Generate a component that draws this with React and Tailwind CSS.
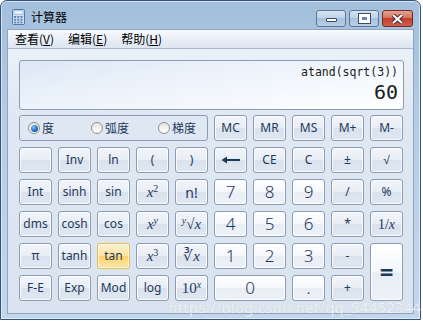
import React from "react";

const ui = { fontFamily: '"Noto Sans", "Noto Sans CJK SC", sans-serif' };
const cjk = { fontFamily: '"Noto Sans CJK SC", "Noto Sans", sans-serif' };
const serif = { fontFamily: '"Liberation Serif", serif' };

const fnBtn =
  "border border-[#8d9cb2] rounded-[3px] bg-[linear-gradient(180deg,#f2f5fa_0%,#e8eef6_48%,#d9e2ee_52%,#e0e7f1_100%)] shadow-[inset_0_0_0_1px_rgba(255,255,255,0.75)] text-[#1e395b] flex items-center justify-center";
const numBtn =
  "border border-[#8d9cb2] rounded-[3px] bg-[linear-gradient(180deg,#ffffff_0%,#f4f7fb_48%,#e8eef5_52%,#eef2f8_100%)] shadow-[inset_0_0_0_1px_rgba(255,255,255,0.9)] text-[#1e395b] flex items-center justify-center";
const hotBtn =
  "border border-[#e3bf5a] rounded-[3px] bg-[linear-gradient(180deg,#fdf1d2_0%,#fde3a0_48%,#fcd36e_52%,#fde6a8_100%)] shadow-[inset_0_0_0_1px_rgba(255,255,255,0.6)] text-[#1e395b] flex items-center justify-center";

const X = () => <i style={serif}>x</i>;

const Back = () => (
  <svg width="20" height="8" viewBox="0 0 20 8">
    <path d="M19 4H4" stroke="#1e395b" strokeWidth="2" />
    <path d="M0.5 4L6 0.5V7.5Z" fill="#1e395b" />
  </svg>
);

const Radio = ({ on }) => (
  <span className="w-[12px] h-[12px] shrink-0 rounded-full border border-[#8f8f8f] bg-[linear-gradient(180deg,#e6e6e6,#ffffff)] flex items-center justify-center">
    {on && (
      <span className="w-[7px] h-[7px] rounded-full bg-[radial-gradient(circle_at_35%_30%,#7fc3ff,#0b5eb8_70%)]" />
    )}
  </span>
);

const CalcIcon = () => (
  <svg width="13" height="16" viewBox="0 0 13 16">
    <rect x="0.5" y="0.5" width="12" height="15" rx="1" fill="#cfe0f3" stroke="#4f79aa" />
    <rect x="2" y="2" width="9" height="3" fill="#ffffff" stroke="#7d9cc2" strokeWidth="0.6" />
    {[0, 1, 2].map((r) =>
      [0, 1, 2].map((c) => (
        <rect key={r + "-" + c} x={2 + c * 3.2} y={7 + r * 2.8} width="2.2" height="1.8" fill="#5f86b8" />
      ))
    )}
  </svg>
);

const rows = [
  [
    { t: "", k: "fn" }, { t: "Inv", k: "fn" }, { t: "ln", k: "fn" }, { t: "(", k: "fn" }, { t: ")", k: "fn" },
    { t: <Back />, k: "fn" }, { t: "CE", k: "fn" }, { t: "C", k: "fn" }, { t: "±", k: "fn" },
    { t: <span style={{ fontFamily: '"Liberation Sans", sans-serif' }}>√</span>, k: "fn" },
  ],
  [
    { t: "Int", k: "fn" }, { t: "sinh", k: "fn" }, { t: "sin", k: "fn" },
    { t: <span className="text-[15px]"><X /><sup className="text-[10px]" style={serif}>2</sup></span>, k: "fn" },
    { t: <span className="text-[14px]">n!</span>, k: "fn" },
    { t: "7", k: "num" }, { t: "8", k: "num" }, { t: "9", k: "num" }, { t: "/", k: "fn" }, { t: "%", k: "fn" },
  ],
  [
    { t: "dms", k: "fn" }, { t: "cosh", k: "fn" }, { t: "cos", k: "fn" },
    { t: <span className="text-[15px]"><X /><sup className="text-[10px]" style={serif}><i>y</i></sup></span>, k: "fn" },
    { t: <span className="text-[15px]" style={serif}><sup className="text-[10px]"><i>y</i></sup>√<X /></span>, k: "fn" },
    { t: "4", k: "num" }, { t: "5", k: "num" }, { t: "6", k: "num" }, { t: "*", k: "fn" },
    { t: <span className="text-[14px]" style={serif}>1/<i>x</i></span>, k: "fn" },
  ],
  [
    { t: "π", k: "fn" }, { t: "tanh", k: "fn" }, { t: "tan", k: "hot" },
    { t: <span className="text-[15px]"><X /><sup className="text-[10px]" style={serif}>3</sup></span>, k: "fn" },
    { t: <span className="text-[15px]" style={serif}>∛<X /></span>, k: "fn" },
    { t: "1", k: "num" }, { t: "2", k: "num" }, { t: "3", k: "num" }, { t: "-", k: "fn" },
    { t: <span className="text-[24px] font-bold leading-none">=</span>, k: "num", cls: "row-span-2" },
  ],
  [
    { t: "F-E", k: "fn" }, { t: "Exp", k: "fn" }, { t: "Mod", k: "fn" }, { t: "log", k: "fn" },
    { t: <span className="text-[15px]" style={serif}>10<sup className="text-[10px]"><i>x</i></sup></span>, k: "fn" },
    { t: "0", k: "num", cls: "col-span-2" }, { t: ".", k: "num" }, { t: "+", k: "fn" },
  ],
];

const kindCls = { fn: fnBtn, num: numBtn, hot: hotBtn };

export default function App() {
  return (
    <div className="w-[423px] h-[322px] bg-white relative overflow-hidden" style={ui}>
      <div className="w-[421px] h-[320px] rounded-t-[7px] border border-[#3c5274] bg-[linear-gradient(180deg,#a3bfdc_0%,#b6cde6_40%,#c3d7ec_100%)] shadow-[inset_0_0_0_1px_rgba(220,240,255,0.8)] flex flex-col">
        {/* title bar */}
        <div className="h-[28px] flex items-start pl-[11px] pr-[7px] shrink-0">
          <div className="mt-[8px]"><CalcIcon /></div>
          <span className="ml-[6px] mt-[7px] text-[12px] text-black" style={cjk}>计算器</span>
          <div className="ml-auto mt-[9px] flex gap-[3px]">
            <div className="w-[30px] h-[17px] rounded-[3px] border border-[#5f7594] bg-[linear-gradient(180deg,#d7e4f2_0%,#bcd0e7_50%,#a7c1de_50%,#b9cfe7_100%)] flex items-end justify-center pb-[4px]">
              <span className="w-[11px] h-[4px] bg-white border border-[#3b4c63] rounded-[1px]" />
            </div>
            <div className="w-[30px] h-[17px] rounded-[3px] border border-[#5f7594] bg-[linear-gradient(180deg,#d7e4f2_0%,#bcd0e7_50%,#a7c1de_50%,#b9cfe7_100%)] flex items-center justify-center">
              <span className="w-[11px] h-[9px] border-[3px] border-white outline outline-1 outline-[#3b4c63] bg-[#6f86a5]" />
            </div>
            <div className="w-[31px] h-[17px] rounded-[3px] border border-[#6f2a22] bg-[linear-gradient(180deg,#eaa08f_0%,#d7705d_50%,#c1402c_50%,#d0604a_100%)] flex items-center justify-center">
              <svg width="13" height="10" viewBox="0 0 13 10">
                <path d="M2 1L11 9M11 1L2 9" stroke="#3b2a2a" strokeWidth="4" />
                <path d="M2 1L11 9M11 1L2 9" stroke="#ffffff" strokeWidth="2.2" />
              </svg>
            </div>
          </div>
        </div>

        {/* client */}
        <div className="mx-[6px] mb-[5px] flex-1 border border-[#8fa5c0] bg-[linear-gradient(180deg,#eef3f9_0%,#dfe8f3_30%,#d9e4f0_100%)] flex flex-col">
          <div className="h-[19px] bg-[linear-gradient(180deg,#f8fafd_0%,#e9eff7_50%,#dde5f0_100%)] border-b border-[#a9b8cb] flex items-center text-[12px] text-black" style={cjk}>
            <span className="ml-[7px]">查看(<span className="underline">V</span>)</span>
            <span className="ml-[14px]">编辑(<span className="underline">E</span>)</span>
            <span className="ml-[14px]">帮助(<span className="underline">H</span>)</span>
          </div>

          <div className="pl-[11px] pr-[9px] pt-[11px]">
            <div className="h-[50px] rounded-[3px] border border-[#8a9bb2] bg-[linear-gradient(170deg,#dde8f6_0%,#eef4fb_45%,#ffffff_100%)] flex flex-col items-end pr-[5px] pt-[3px] text-[#1b1b1b]" style={{ fontFamily: '"DejaVu Sans Mono", monospace' }}>
              <span className="text-[11.5px] leading-[16px]">atand(sqrt(3))</span>
              <span className="text-[20px] leading-[24px]">60</span>
            </div>

            <div className="mt-[5px] grid grid-cols-[repeat(10,33px)] grid-rows-[repeat(6,26px)] gap-[6px] text-[12px]">
              <div className="col-span-5 rounded-[3px] border border-[#8d9cb2] flex items-center text-[12px] text-[#1e395b] whitespace-nowrap" style={cjk}>
                <span className="ml-[8px] w-[63px] flex items-center gap-[2px]"><Radio on />度</span>
                <span className="w-[67px] flex items-center gap-[2px]"><Radio />弧度</span>
                <span className="flex items-center gap-[2px]"><Radio />梯度</span>
              </div>
              {["MC", "MR", "MS", "M+", "M-"].map((m) => (
                <div key={m} className={fnBtn}>{m}</div>
              ))}
              {rows.map((r, i) =>
                r.map((b, j) => (
                  <div
                    key={i + "-" + j}
                    className={`${kindCls[b.k]} ${b.cls || ""} ${b.k === "num" && typeof b.t === "string" ? "text-[17px] font-light" : ""}`}
                  >
                    {b.t}
                  </div>
                ))
              )}
            </div>
          </div>
        </div>
      </div>

      <div className="absolute left-[168px] top-[296px] text-[15px] text-white/75 tracking-[0.2px] [text-shadow:0_0_1px_rgba(0,0,0,0.15)]" style={ui}>
        https://blog.csdn.net/qq_54452344
      </div>
    </div>
  );
}
